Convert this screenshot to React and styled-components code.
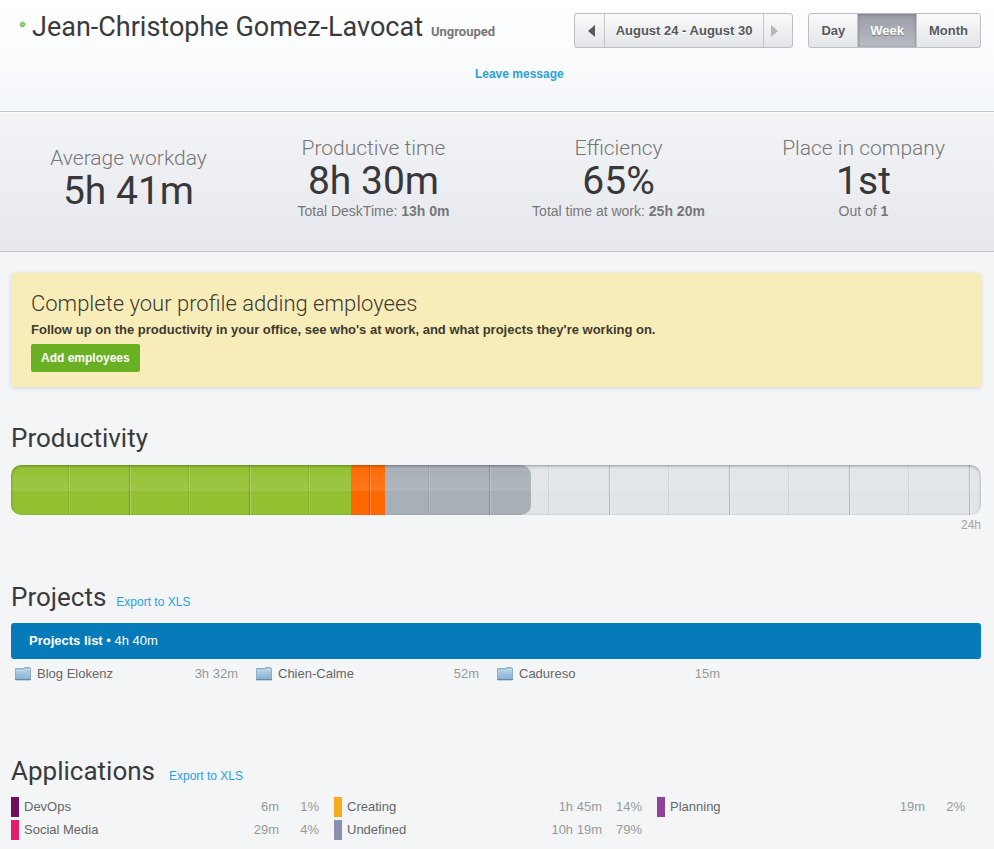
import React, { useState } from 'react';
import styled, { createGlobalStyle } from 'styled-components';

const stats = [
    { label: 'Average workday', value: '5h 41m' },
    { label: 'Productive time', value: '8h 30m', note: 'Total DeskTime:', total: '13h 0m' },
    { label: 'Efficiency', value: '65%', note: 'Total time at work:', total: '25h 20m' },
    { label: 'Place in company', value: '1st', note: 'Out of', total: '1' },
];

// share of the 24 hours, in percent
const segments = [
    { kind: 'productive', share: 35, color: '#93c131' },
    { kind: 'unproductive', share: 3.6, color: '#ff6800' },
    { kind: 'neutral', share: 15, color: '#a8afb7' },
];

const projects = [
    { name: 'Blog Elokenz', time: '3h 32m' },
    { name: 'Chien-Calme', time: '52m' },
    { name: 'Cadureso', time: '15m' },
];

const applications = [
    { name: 'DevOps', time: '6m', percent: '1%', color: '#6d0f5b' },
    { name: 'Creating', time: '1h 45m', percent: '14%', color: '#f6ab1c' },
    { name: 'Planning', time: '19m', percent: '2%', color: '#91439b' },
    { name: 'Social Media', time: '29m', percent: '4%', color: '#e31b6a' },
    { name: 'Undefined', time: '10h 19m', percent: '79%', color: '#8b91ac' },
];

const views = ['Day', 'Week', 'Month'];

function FolderIcon() {
    return (
        <svg width="16" height="14" viewBox="0 0 16 14" aria-hidden="true">
            <defs>
                <linearGradient id="folder" x1="0" y1="0" x2="0" y2="1">
                    <stop offset="0" stopColor="#b5d2e6" />
                    <stop offset="1" stopColor="#83b0d0" />
                </linearGradient>
            </defs>
            <path d="M.5 1.5h8l1-1h5l1 1v11.500h-15z" fill="#a3c2d9" stroke="#8fafc8" />
            <path d="M1 3.500h8l1.500-1H15V13H1z" fill="url(#folder)" />
            <path d="M1 3.500h8l1.500-1H15" fill="none" stroke="#c3dbea" />
            <path d="M0 12.500h16" stroke="#6488a8" />
        </svg>
    );
}

function Arrow({ left }) {
    return (
        <svg width="7" height="12" viewBox="0 0 7 12" aria-hidden="true">
            <path d={left ? 'M7 0v12L0 6z' : 'M0 0v12l7-6z'} fill="currentColor" />
        </svg>
    );
}

export default function App() {
    const [view, setView] = useState('Week');

    return (
        <>
            <GlobalStyle />
            <Header>
                <Person>
                    <NameRow>
                        <Status />
                        <Name>Jean-Christophe Gomez-Lavocat</Name>
                        <Group>Ungrouped</Group>
                    </NameRow>
                    <MessageLink href="#message">Leave message</MessageLink>
                </Person>
                <Controls>
                    <ButtonBar>
                        <ArrowButton aria-label="Previous week"><Arrow left /></ArrowButton>
                        <BarButton>August 24 - August 30</BarButton>
                        <ArrowButton aria-label="Next week" disabled><Arrow /></ArrowButton>
                    </ButtonBar>
                    <ButtonBar>
                        {views.map((name) => (
                            <ViewButton
                                key={name}
                                $active={name === view}
                                aria-pressed={name === view}
                                onClick={() => setView(name)}
                            >
                                {name}
                            </ViewButton>
                        ))}
                    </ButtonBar>
                </Controls>
            </Header>

            <Stats>
                {stats.map((stat) => (
                    <Stat key={stat.label}>
                        <StatLabel>{stat.label}</StatLabel>
                        <StatValue>{stat.value}</StatValue>
                        {stat.note && <StatNote>{stat.note} <b>{stat.total}</b></StatNote>}
                    </Stat>
                ))}
            </Stats>

            <Main>
                <Banner>
                    <BannerTitle>Complete your profile adding employees</BannerTitle>
                    <BannerText>
                        Follow up on the productivity in your office, see who's at work, and what projects they're working on.
                    </BannerText>
                    <AddButton>Add employees</AddButton>
                </Banner>

                <Section>
                    <SectionHead>
                        <Title>Productivity</Title>
                    </SectionHead>
                    <DayBar>
                        {segments.map((s) => (
                            <Segment key={s.kind} $color={s.color} style={{ width: `${s.share}%` }} />
                        ))}
                        <Ticks />
                    </DayBar>
                    <BarEnd>24h</BarEnd>
                </Section>

                <Section>
                    <SectionHead>
                        <Title>Projects</Title>
                        <ExportLink href="#projects-xls">Export to XLS</ExportLink>
                    </SectionHead>
                    <ListBar><b>Projects list</b> • 4h 40m</ListBar>
                    <ProjectList>
                        {projects.map((p) => (
                            <Project key={p.name}>
                                <FolderIcon />
                                <ItemName>{p.name}</ItemName>
                                <ItemTime>{p.time}</ItemTime>
                            </Project>
                        ))}
                    </ProjectList>
                </Section>

                <Section>
                    <SectionHead $gap={14}>
                        <Title>Applications</Title>
                        <ExportLink href="#applications-xls">Export to XLS</ExportLink>
                    </SectionHead>
                    <AppList>
                        {applications.map((a) => (
                            <Application key={a.name}>
                                <Swatch $color={a.color} />
                                <ItemName>{a.name}</ItemName>
                                <ItemTime>{a.time}</ItemTime>
                                <Percent>{a.percent}</Percent>
                            </Application>
                        ))}
                    </AppList>
                </Section>
            </Main>
        </>
    );
}

// CSS
const heading = 'Roboto, "Liberation Sans", sans-serif';

const GlobalStyle = createGlobalStyle`
* {
    box-sizing: border-box;
}

body {
    margin: 0;
    background: #f3f5f7;
    color: #666;
    font: 13px/20px "Liberation Sans", Arial, sans-serif;
}

h1, h2, p, ul {
    margin: 0;
    padding: 0;
}

li {
    list-style: none;
}

button {
    font: inherit;
    cursor: pointer;
}
`;

const Header = styled.header`
    display: flex;
    gap: 10px;
    height: 112px;
    padding: 13px 13px 0 11px;
    background: linear-gradient(#fff, #f9fbfd 60%, #f3f6fa);
    border-bottom: 1px solid #bfc3c8;
`;

const Person = styled.div`
    flex: 1;
    display: flex;
    flex-direction: column;
    gap: 23px;
`;

const NameRow = styled.div`
    display: flex;
    align-items: baseline;
    height: 28px;
    padding-left: 9px;
    white-space: nowrap;
`;

const Status = styled.span`
    align-self: flex-start;
    width: 5px;
    height: 5px;
    margin: 9px 7px 0 0;
    border: 1px solid #5cb531;
    border-radius: 50%;
    background: #a5d989;
    box-shadow: 0 0 2px 1px #d9f5cb;
`;

const Name = styled.h1`
    color: #3a3a3c;
    font: 400 27px/28px ${heading};
`;

const Group = styled.span`
    margin-left: 8px;
    color: #777;
    font: 700 13px/20px ${heading};
`;

const MessageLink = styled.a`
    align-self: flex-end;
    color: #2c9fd9;
    font-size: 12px;
    font-weight: bold;
    text-decoration: none;
`;

const Controls = styled.div`
    display: flex;
    gap: 15px;
`;

const ButtonBar = styled.div`
    display: flex;
    height: 35px;
    border: 1px solid #bcbec4;
    border-radius: 3px;
    background: linear-gradient(#fafafb, #e4e5e9);
    overflow: hidden;
`;

const BarButton = styled.button`
    padding: 1px 11px 0;
    border: 0;
    background: none;
    color: #55585c;
    font-weight: bold;
    white-space: nowrap;
    text-shadow: 0 1px 0 #fff;

    & + & {
        border-left: 1px solid #c4c6cb;
    }
`;

const ArrowButton = styled(BarButton)`
    display: flex;
    align-items: center;
    justify-content: center;
    width: 29px;
    padding: 0 0 0 4px;

    &:disabled {
        padding: 0 8px 0 0;
        color: #b4b6ba;
    }
`;

const ViewButton = styled(BarButton)`
    padding: 1px 12px 0;

    ${(props) => props.$active && `
        background: linear-gradient(#9b9da6, #b9bbc2);
        box-shadow: inset 0 1px 3px #777a84;
        color: #fff;
        text-shadow: 0 1px 1px #777;
    `}
`;

const Stats = styled.section`
    display: grid;
    grid-template-columns: repeat(4, 1fr);
    align-items: center;
    height: 140px;
    padding: 0 8px 7px 6px;
    background: linear-gradient(#f3f4f6, #e6e8ee);
    border-bottom: 1px solid #bfc0c4;
    box-shadow: inset 0 1px 0 #fafbfc;
    text-align: center;
`;

const Stat = styled.div`
    color: #777;
`;

const StatLabel = styled.h2`
    font: 300 21px/26px ${heading};
`;

const StatValue = styled.p`
    color: #38383a;
    font: 400 39px/40px ${heading};
`;

const StatNote = styled.p`
    font-size: 14px;
`;

const Main = styled.main`
    padding: 21px 13px 8px 11px;
`;

const Banner = styled.section`
    padding: 18px 20px 15px;
    border-radius: 3px;
    background: #f8edb9;
    box-shadow: 0 1px 4px #d3d5da;
    color: #3c3a30;
`;

const BannerTitle = styled.h2`
    font: 300 22px/26px ${heading};
`;

const BannerText = styled.p`
    margin: 3px 0 4px;
    font-weight: bold;
`;

const AddButton = styled.button`
    height: 28px;
    padding: 0 10px;
    border: 0;
    border-radius: 2px;
    background: #69b023;
    color: #fff;
    font-size: 12px;
    font-weight: bold;
`;

const Section = styled.section`
    margin-top: 34px;

    & + & {
        margin-top: 45px;
    }

    & + & + & {
        margin-top: 70px;
    }
`;

const SectionHead = styled.div`
    display: flex;
    align-items: baseline;
    gap: ${(props) => props.$gap || 10}px;
    height: 34px;
`;

const Title = styled.h2`
    color: #3a3a3c;
    font: 400 26px/34px ${heading};
`;

const ExportLink = styled.a`
    color: #2c9fe0;
    font-size: 12px;
    text-decoration: none;
`;

const DayBar = styled.div`
    position: relative;
    display: flex;
    height: 50px;
    margin-top: 10px;
    border-radius: 10px;
    background: #e2e5e8;
    overflow: hidden;
`;

const Segment = styled.div`
    background: ${(props) => props.$color};

    &:nth-child(3) {
        border-radius: 0 10px 10px 0;
    }
`;

// hour marks and gloss over the coloured segments
const Ticks = styled.div`
    position: absolute;
    inset: 0;
    border-radius: 10px;
    background:
        linear-gradient(rgba(255, 255, 255, 0.01), rgba(255, 255, 255, 0.1)) 0 0 / 100% 26px no-repeat,
        repeating-linear-gradient(
            90deg,
            transparent 0 57px,
            rgba(0, 0, 0, 0.08) 57px 58px,
            rgba(255, 255, 255, 0.15) 58px 59px,
            transparent 59px 118px,
            rgba(0, 0, 0, 0.2) 118px 119px,
            rgba(255, 255, 255, 0.25) 119px 120px
        );
    box-shadow: inset 0 1px 3px rgba(0, 0, 0, 0.35);
`;

const BarEnd = styled.p`
    color: #a3a3a3;
    font-size: 12px;
    text-align: right;
`;

const ListBar = styled.div`
    margin-top: 9px;
    padding: 8px 18px;
    border-radius: 3px;
    background: #077ab9;
    color: #fff;
`;

const ProjectList = styled.ul`
    display: grid;
    grid-template-columns: repeat(4, 1fr);
    padding: 5px 2px 0 4px;
`;

const Project = styled.li`
    display: flex;
    align-items: center;
    gap: 6px;
    padding-right: 18px;
`;

const AppList = styled.ul`
    display: grid;
    grid-template-columns: repeat(3, 1fr);
    row-gap: 3px;
    margin-top: 9px;
    padding-right: 1px;
`;

const Application = styled.li`
    display: flex;
    padding-right: 15px;
`;

const Swatch = styled.span`
    width: 8px;
    height: 20px;
    margin-right: 5px;
    background: ${(props) => props.$color};
`;

const ItemName = styled.span`
    flex: 1;
`;

const ItemTime = styled.span`
    color: #999;
`;

const Percent = styled(ItemTime)`
    width: 40px;
    text-align: right;
`;
